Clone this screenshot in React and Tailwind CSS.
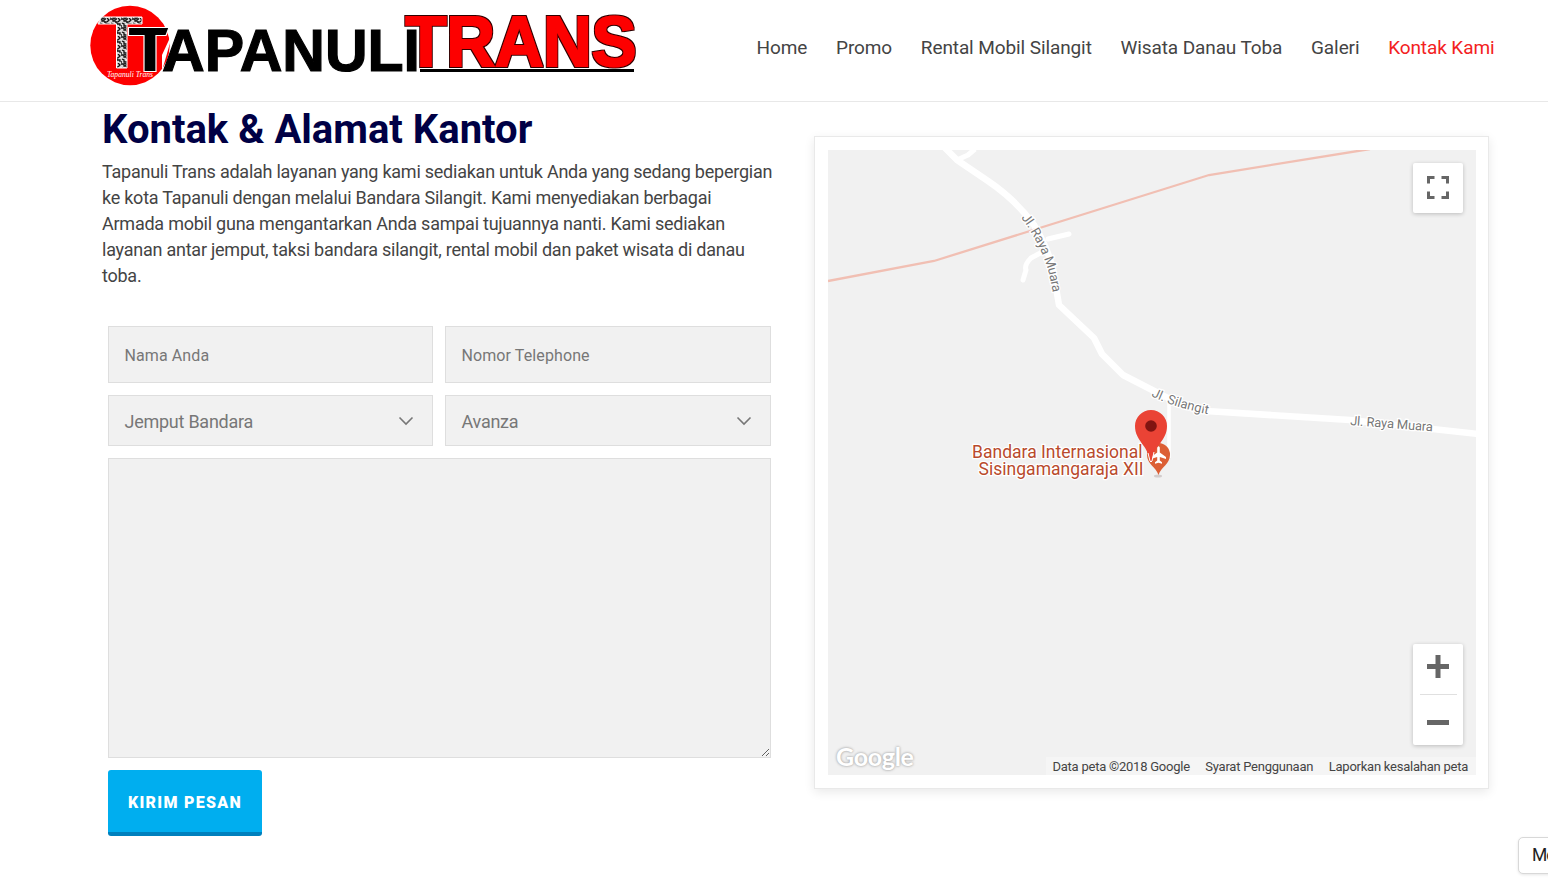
const NAV = ['Home', 'Promo', 'Rental Mobil Silangit', 'Wisata Danau Toba', 'Galeri', 'Kontak Kami'];

function Logo() {
  return (
    <svg width="556" height="90" viewBox="84 0 556 90" className="block" role="img" aria-label="Tapanuli Trans">
      <defs>
        <pattern id="batik" width="11" height="9" patternUnits="userSpaceOnUse">
          <rect width="11" height="9" fill="#d8d8d8" />
          <path d="M0 1h3v2h2v-2h2M8 0l2 2-2 2M1 5l2 1v2h3M5 4h2v2h3v2M0 8h1M4 0v1" stroke="#111" strokeWidth="1.3" fill="none" />
        </pattern>
        <filter id="outline" x="-5%" y="-10%" width="110%" height="120%">
          <feMorphology in="SourceAlpha" operator="dilate" radius="0.8" result="grown" />
          <feFlood floodColor="#300" />
          <feComposite in2="grown" operator="in" result="edge" />
          <feMerge>
            <feMergeNode in="edge" />
            <feMergeNode in="SourceGraphic" />
          </feMerge>
        </filter>
      </defs>
      <circle cx="130" cy="45.500" r="39.700" fill="#fd0000" />
      <path d="M101.500 17H142V24H127V68H116.500V24H98Z" fill="url(#batik)" stroke="#fff" strokeWidth="1" />
      <path d="M128.500 27.500H169L166 35.500H156V71.500H144V35.500H128.500Z" fill="#000" stroke="#fff" strokeWidth="1.200" />
      <path d="M174 29L162 55V71Z" fill="#fff" />
      <text x="162" y="70.500" textLength="258" lengthAdjust="spacingAndGlyphs" fontFamily="Liberation Sans, sans-serif" fontWeight="700" fontSize="59.500" fill="#000" stroke="#000" strokeWidth="1.200">APANULI</text>
      <text x="107" y="77" textLength="46" lengthAdjust="spacingAndGlyphs" fontFamily="Liberation Serif, serif" fontStyle="italic" fontSize="8" fill="#fff">Tapanuli Trans</text>
      <text x="405.500" y="65.500" textLength="231" lengthAdjust="spacingAndGlyphs" fontFamily="Liberation Sans, sans-serif" fontWeight="700" fontSize="70" fill="#fd0000" stroke="#fd0000" strokeWidth="2" filter="url(#outline)">TRANS</text>
      <rect x="420" y="69" width="214" height="3" fill="#000" />
    </svg>
  );
}

function SelectBox({ label }) {
  return (
    <div className="flex h-[51px] items-center justify-between border border-[#dedede] bg-[#f1f1f1] pl-[15.500px] pr-[18px] text-[18px] tracking-[-0.25px] text-[#777]">
      <span className="pt-[2px]">{label}</span>
      <svg width="16" height="10" viewBox="0 0 16 10" fill="none" stroke="#777" strokeWidth="1.600">
        <path d="M1.500 1.500L8 8L14.500 1.500" />
      </svg>
    </div>
  );
}

function MapDrawing() {
  return (
    <svg width="648" height="625" viewBox="828 150 648 625" className="block bg-[#f1f1f1]" fontFamily="Roboto, sans-serif">
      <defs>
        <path id="muara" d="M1021 218C1033 232 1043 254 1048 270C1051 282 1053 292 1055 306" />
        <path id="silangit" d="M1151 396Q1178 409 1217 416" />
        <path id="muara2" d="M1350 425Q1390 428 1440 432" />
      </defs>
      <g fill="none" stroke="#fff" strokeLinejoin="round">
        <path d="M945 148L957 160L988 181Q1016 200 1034 225Q1048 248 1053 270L1059 305L1094 338L1102 354L1123 375L1160 394Q1180 405 1206 411L1350 420L1478 434" strokeWidth="6.500" />
        <path d="M957 160L968 155L975 149" strokeWidth="5" />
        <path d="M1069 234L1048 239M1046 250L1031 258Q1024 265 1026 270L1023 280" strokeWidth="5" strokeLinecap="round" />
        <path d="M1169 404V458" strokeWidth="3.500" />
      </g>
      <path d="M828 281L934 261L1209 175L1370 149" fill="none" stroke="#f1bfb3" strokeWidth="2.300" />
      <g fontSize="13" fill="#777" stroke="#fff" strokeWidth="2.500" paintOrder="stroke">
        <text textLength="82"><textPath href="#muara">Jl. Raya Muara</textPath></text>
        <text textLength="60"><textPath href="#silangit">Jl. Silangit</textPath></text>
        <text textLength="83"><textPath href="#muara2">Jl. Raya Muara</textPath></text>
      </g>
      <g fontSize="17.500" fill="#b94a2c" stroke="#fff" strokeWidth="2.500" paintOrder="stroke">
        <text x="972" y="458" textLength="170.500">Bandara Internasional</text>
        <text x="978.500" y="475" textLength="165">Sisingamangaraja XII</text>
      </g>
      <ellipse cx="1158" cy="476" rx="4" ry="1.500" fill="#d2cccc" />
      <path d="M1158.500 443A11.700 11.700 0 0 0 1147 455C1147 464 1156 467 1158.500 475C1161 467 1170 464 1170 455A11.700 11.700 0 0 0 1158.500 443Z" fill="#dc5f35" />
      <path d="M1157.200 447.500Q1158.500 445 1159.800 447.500V452.500L1166 457V459L1159.800 457V460.500L1162 462.300V463.700L1158.500 462.700L1155 463.700V462.300L1157.200 460.500V457L1151 459V457L1157.200 452.500Z" fill="#fff" />
      <path d="M1151 410A16 16 0 0 0 1135 426C1135 441 1148 445 1150 461Q1151 463 1152 461C1154 445 1167 441 1167 426A16 16 0 0 0 1151 410Z" fill="#ea4335" />
      <path d="M1148 453L1150 461Q1151 463 1152 461L1154 452" fill="none" stroke="#fff" strokeWidth="1" />
      <circle cx="1151" cy="426" r="5.800" fill="#811411" />
    </svg>
  );
}

export default function App() {
  return (
    <div className="relative flex h-[878px] w-[1548px] flex-col overflow-hidden bg-white font-['Roboto',sans-serif] text-[#444]">
      <header className="flex h-[102px] shrink-0 items-start justify-between border-b border-[#e8e8e8] pl-[84px] pr-[53.500px]">
        <Logo />
        <nav className="flex gap-[28.700px] pt-[34px] text-[19px] leading-[28px] tracking-[-0.1px] text-[#444]">
          {NAV.map((n) => (
            <a key={n} className={n === 'Kontak Kami' ? 'text-[#f32121]' : ''}>{n}</a>
          ))}
        </nav>
      </header>
      <main className="flex items-start">
        <section className="ml-[102px] w-[712px] shrink-0">
          <h1 className="mt-[4px] text-[40px] font-bold leading-[48px] text-[#000045]">Kontak &amp; Alamat Kantor</h1>
          <p className="mt-[5px] whitespace-nowrap text-[18px] leading-[26px] tracking-[-0.24px]">
            Tapanuli Trans adalah layanan yang kami sediakan untuk Anda yang sedang bepergian<br />
            ke kota Tapanuli dengan melalui Bandara Silangit. Kami menyediakan berbagai<br />
            Armada mobil guna mengantarkan Anda sampai tujuannya nanti. Kami sediakan<br />
            layanan antar jemput, taksi bandara silangit, rental mobil dan paket wisata di danau<br />
            toba.
          </p>
          <form className="ml-[6px] mt-[37px] w-[663px]">
            <div className="grid grid-cols-[325px_326px] gap-3">
              <input placeholder="Nama Anda" className="h-[57px] border border-[#dedede] bg-[#f1f1f1] px-[15.500px] pt-[2px] text-[16px] tracking-[0.1px] placeholder:text-[#777]" />
              <input placeholder="Nomor Telephone" className="h-[57px] border border-[#dedede] bg-[#f1f1f1] px-[15.500px] pt-[2px] text-[16px] tracking-[0.1px] placeholder:text-[#777]" />
              <SelectBox label="Jemput Bandara" />
              <SelectBox label="Avanza" />
            </div>
            <textarea className="mt-3 block h-[300px] w-full resize border border-[#dedede] bg-[#f1f1f1]" />
            <button type="button" className="mt-3 h-[66px] w-[154px] rounded-[3px] border-b-4 border-[#0080bd] bg-[#00aeef] pt-[3px] text-[16px] font-black tracking-[1.300px] text-white">KIRIM PESAN</button>
          </form>
        </section>
        <section className="relative mt-[34px] h-[653px] w-[675px] border border-[#e9e9e9] bg-white p-[13px] shadow-[0_3px_10px_rgba(0,0,0,0.09)]">
          <MapDrawing />
          <div className="absolute right-[25px] top-[26px] flex h-[50px] w-[50px] items-center justify-center rounded-[2px] bg-white pb-[2px] shadow-[0_1px_4px_rgba(0,0,0,0.22)]">
            <svg width="22" height="23" viewBox="0 0 22 23" fill="none" stroke="#666" strokeWidth="3">
              <path d="M7.500 1.500H1.500V7.500M14.500 1.500H20.500V7.500M7.500 21.500H1.500V15.500M14.500 21.500H20.500V15.500" />
            </svg>
          </div>
          <div className="absolute bottom-[43px] right-[25px] flex h-[101px] w-[50px] flex-col items-center rounded-[2px] bg-white shadow-[0_1px_4px_rgba(0,0,0,0.22)]">
            <svg width="22" height="23" viewBox="0 0 22 23" className="mt-[11px]" fill="#666">
              <path d="M8.500 0h5v9h8.500v5h-8.500v9h-5v-9H0v-5h8.500z" />
            </svg>
            <div className="mt-4 h-px w-[37px] bg-[#e0e0e0]" />
            <div className="mt-[25px] h-[5px] w-[22px] bg-[#666]" />
          </div>
          <div className="absolute bottom-[17px] left-[21px] font-['Lato',sans-serif] text-[25px] font-bold leading-[30px] tracking-[-0.3px] text-white [text-shadow:0_0_3px_#aaa,0_0_2px_#bbb]">Google</div>
          <div className="absolute bottom-[13px] right-[12px] flex h-[18px] items-center gap-[15.500px] bg-[#f5f5f5] pl-[6px] pr-[8px] pt-[2px] text-[13px] tracking-[-0.24px] text-[#444]">
            <span>Data peta ©2018 Google</span>
            <span>Syarat Penggunaan</span>
            <span>Laporkan kesalahan peta</span>
          </div>
        </section>
      </main>
      <div className="absolute left-[1518px] top-[837px] h-[37px] w-[120px] rounded-[5px] border border-[#d8d8d8] bg-white pl-[13px] text-[17.500px] leading-[34px] tracking-[-1px] text-[#222] shadow-[0_1px_3px_rgba(0,0,0,0.1)]">Me</div>
    </div>
  );
}
